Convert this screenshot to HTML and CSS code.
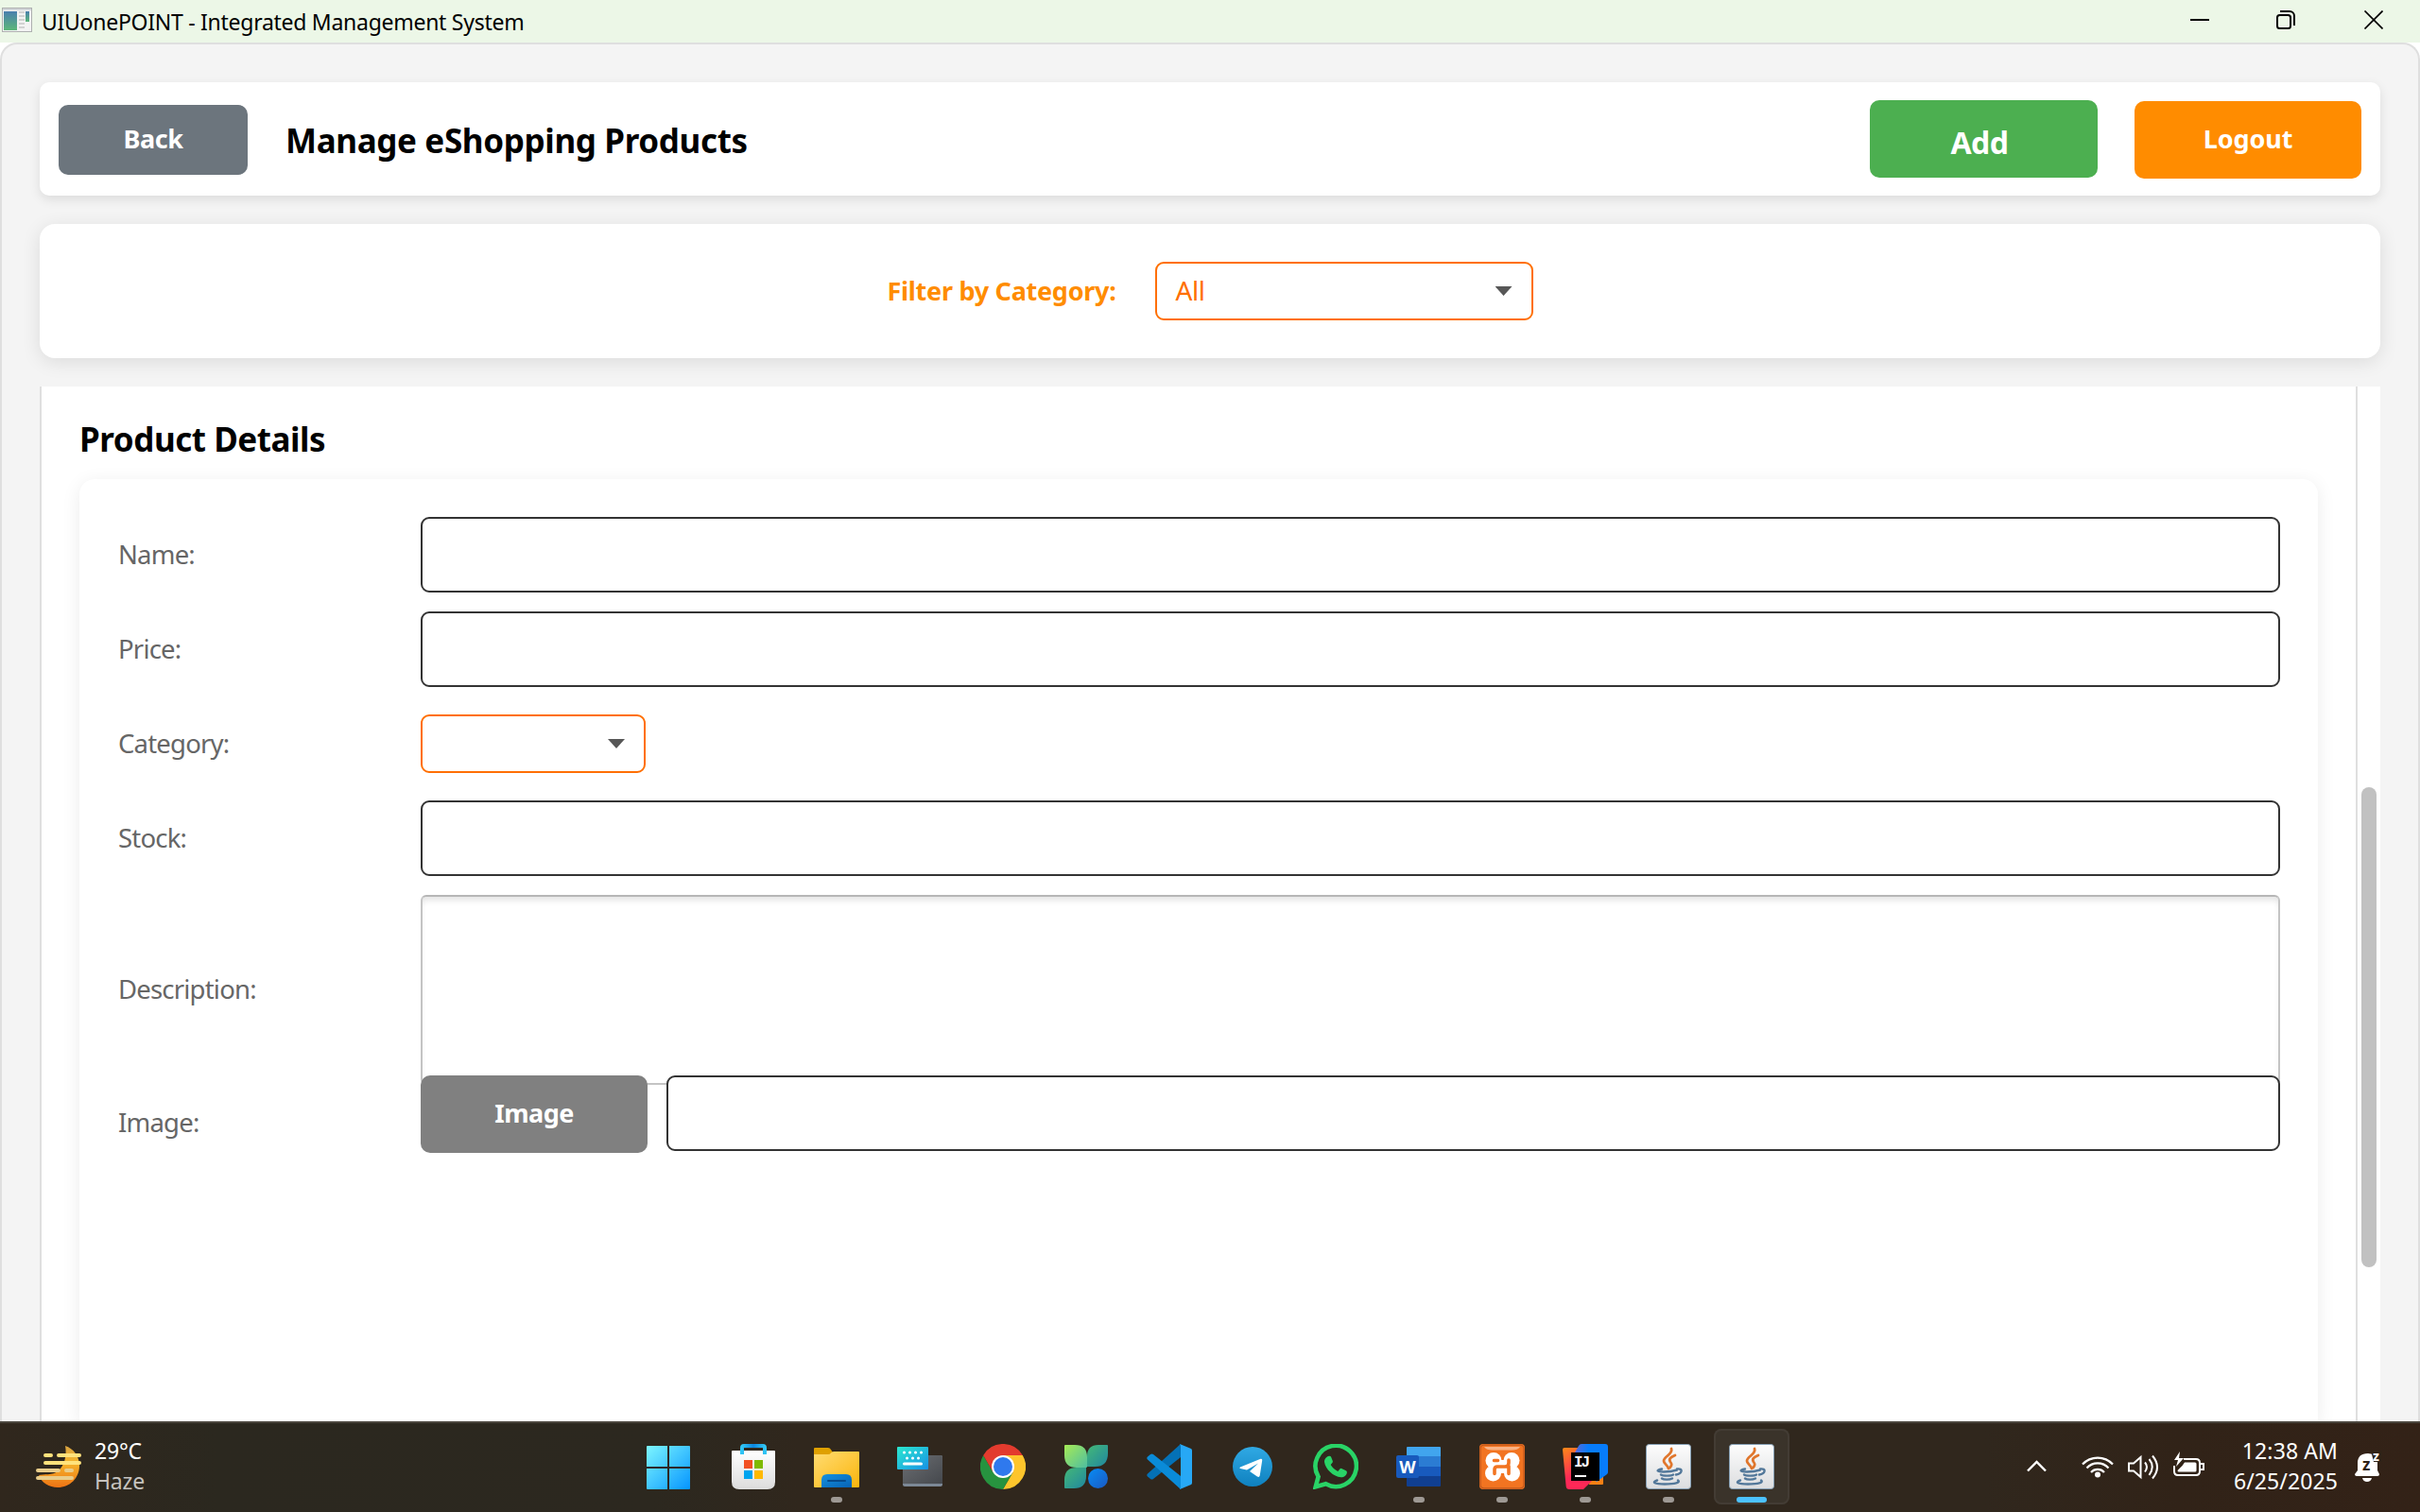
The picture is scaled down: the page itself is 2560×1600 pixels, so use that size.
FILE: index.html
```html
<!DOCTYPE html>
<html lang="en">
<head>
<meta charset="utf-8">
<title>UIUonePOINT - Integrated Management System</title>
<link rel="stylesheet" href="styles.css">
</head>
<body>
<header class="titlebar">
  <svg class="app-icon" width="32" height="26" viewBox="0 0 32 26">
    <defs><linearGradient id="app" x1="0" y1="0" x2="0" y2="1"><stop offset="0" stop-color="#4a7fae"/><stop offset="1" stop-color="#5cb779"/></linearGradient></defs>
    <rect x=".5" y=".5" width="31" height="25" fill="#f3f3f3" stroke="#aeb0b0"/>
    <rect x="1" y="1" width="30" height="2" fill="#d4d7da"/>
    <rect x="2" y="4" width="14" height="20" fill="url(#app)"/>
    <path d="M18 5h6M18 9h6M18 13h6M18 17h6M18 21h6" stroke="#d2d2d2" stroke-width="2"/>
    <rect x="25" y="4" width="4" height="11" fill="url(#app)"/>
  </svg>
  <span class="window-title">UIUonePOINT - Integrated Management System</span>
  <svg class="window-controls" width="204" height="20" viewBox="0 0 204 20" fill="none" stroke="#000" stroke-width="2">
    <path d="M0 10h20"/>
    <rect x="92" y="5" width="14" height="14" rx="2.5"/>
    <path d="M95 1h10a5 5 0 0 1 5 5v10"/>
    <path d="M184.500 .5l19 19M203.500 .5l-19 19" stroke-width="1.700"/>
  </svg>
</header>
<main class="window">
  <section class="card toolbar">
    <button class="btn back">Back</button>
    <h1 class="page-title">Manage eShopping Products</h1>
    <button class="btn add">Add</button>
    <button class="btn logout">Logout</button>
  </section>
  <section class="card filter">
    <span class="filter-label">Filter by Category:</span>
    <div class="combo combo-filter"><span>All</span><i class="arrow"></i></div>
  </section>
  <section class="scroll-pane">
    <div class="content">
      <h2 class="section-title">Product Details</h2>
      <div class="form">
        <label class="label">Name:</label><div class="field"></div>
        <label class="label">Price:</label><div class="field"></div>
        <label class="label">Category:</label><div class="combo combo-category"><i class="arrow"></i></div>
        <label class="label">Stock:</label><div class="field"></div>
        <label class="label">Description:</label><div class="textarea"></div>
        <label class="label image-label">Image:</label>
        <div class="image-row"><button class="btn image">Image</button><div class="field"></div></div>
      </div>
    </div>
    <div class="scrollbar"><div class="thumb"></div></div>
  </section>
</main>
<footer class="taskbar">
  <div class="weather">
    <svg width="48" height="44" viewBox="0 0 48 44">
      <defs><linearGradient id="moon" x1="0" y1="0" x2="0" y2="1"><stop offset="0" stop-color="#d9a441"/><stop offset=".4" stop-color="#f5b52c"/><stop offset="1" stop-color="#ee7414"/></linearGradient></defs>
      <path d="M31 0c9 3 15 11 15 21 0 13-10 23-23 23-9 0-17-5-20-13 5-1 15 0 20-4 7-5 10-17 8-27z" fill="url(#moon)"/>
      <g fill="none" stroke-width="4" stroke-linecap="round"><path d="M10 10h6M24 10h22M10 18h36" stroke="#ffe27c"/><path d="M2 26h22M32 26h6M2 34h36" stroke="#e9cd8b"/></g>
    </svg>
    <div class="weather-text">29°C<br><span class="dim">Haze</span></div>
  </div>
  <nav class="apps">
    <div class="app start"><svg viewBox="0 0 48 48"><defs><linearGradient id="win" gradientUnits="userSpaceOnUse" x1="1" y1="2" x2="47" y2="48"><stop offset="0" stop-color="#7df6ff"/><stop offset="1" stop-color="#0595ff"/></linearGradient></defs><path d="M2 2h21v22H1V3q0-1 1-1zM25 2h21q1 0 1 1v21H25zM1 26h22v22H2q-1 0-1-1zM25 26h22v21q0 1-1 1H25z" fill="url(#win)"/></svg></div>
    <div class="app"><svg viewBox="0 0 48 48"><defs><linearGradient id="bag" x1="0" y1="0" x2="0" y2="1"><stop offset="0" stop-color="#fff"/><stop offset="1" stop-color="#dcdcdc"/></linearGradient><linearGradient id="hdl"><stop offset="0" stop-color="#30c5f4"/><stop offset=".5" stop-color="#0c86e0"/><stop offset="1" stop-color="#30c5f4"/></linearGradient></defs><path d="M2 7h44q1 0 1 1v32q0 8-8 8H9q-8 0-8-8V8q0-1 1-1z" fill="url(#bag)"/><path d="M12 11V4q0-2 2-2h20q2 0 2 2v7" fill="none" stroke="url(#hdl)" stroke-width="4"/><path d="M14 17h9v9h-9z" fill="#f25022"/><path d="M25 17h9v9h-9z" fill="#7fba00"/><path d="M14 28h9v9h-9z" fill="#00a4ef"/><path d="M25 28h9v9h-9z" fill="#ffb900"/></svg></div>
    <div class="app"><svg viewBox="0 0 48 48"><defs><linearGradient id="fold" x1="0" y1="0" x2="1" y2="1"><stop offset="0" stop-color="#ffdc72"/><stop offset="1" stop-color="#fbb50d"/></linearGradient><linearGradient id="fb" x1="0" y1="0" x2="1" y2="1"><stop offset="0" stop-color="#1492df"/><stop offset="1" stop-color="#0862b4"/></linearGradient></defs><path d="M0 13V5q0-1 1-1h14q2 0 3 2l2 3v4z" fill="#dfa000"/><path d="M0 11h15q2 0 3-1.500 1-1.500 3-1.500h26q1 0 1 1v36q0 1-1 1H1q-1 0-1-1z" fill="url(#fold)"/><path d="M8 46V38q0-6 6-6h20q6 0 6 6v8z" fill="url(#fb)"/><path d="M15 39h18" stroke="#064b8c" stroke-width="2" stroke-linecap="round"/></svg><i class="dot"></i></div>
    <div class="app"><svg viewBox="0 0 48 48"><defs><linearGradient id="kb" x1="0" y1="0" x2="1" y2="1"><stop offset="0" stop-color="#2be8cf"/><stop offset="1" stop-color="#1791e6"/></linearGradient><linearGradient id="tab" x1="0" y1="0" x2="1" y2="1"><stop offset="0" stop-color="#6c6f73"/><stop offset="1" stop-color="#45484d"/></linearGradient></defs><rect x="6" y="12" width="42" height="33" rx="2" fill="#7c8896"/><path d="M6 14q0-2 2-2h38q2 0 2 2v28H6z" fill="url(#tab)"/><rect y="3" width="33" height="24" rx="1" fill="url(#kb)"/><path d="M7.500 9h.01M13.500 9h.01M19.500 9h.01M25.500 9h.01M10.500 15h.01M16.500 15h.01M22.500 15h.01M7.500 21h18" stroke="#fff" stroke-width="3" stroke-linecap="round"/></svg></div>
    <div class="app"><svg viewBox="0 0 48 48"><path d="M24 24 3.200 12A24 24 0 0 1 44.800 12z" fill="#e33b2e"/><path d="M24 12h20.800A24 24 0 0 1 24 48l10.400-18z" fill="#fdc52c"/><path d="M34.400 30 24 48A24 24 0 0 1 3.200 12l10.400 18 10.400 6z" fill="#27933f"/><path d="M3.200 12 13.600 30 24 24 24 12z" fill="#e33b2e"/><circle cx="24" cy="24" r="12" fill="#fff"/><circle cx="24" cy="24" r="10" fill="#2f79ee"/></svg></div>
    <div class="app"><svg viewBox="0 0 48 48"><defs><linearGradient id="p1" x1="0" y1="0" x2="1" y2="1"><stop offset="0" stop-color="#a6ea55"/><stop offset="1" stop-color="#4fbfa0"/></linearGradient><linearGradient id="p2" x1="0" y1="0" x2="1" y2="1"><stop offset="0" stop-color="#44b877"/><stop offset="1" stop-color="#2087a0"/></linearGradient><linearGradient id="p3" x1="0" y1="0" x2="1" y2="1"><stop offset="0" stop-color="#088cf4"/><stop offset="1" stop-color="#1b59c2"/></linearGradient></defs><path d="M37 1h9q1 0 1 1v8q0 14-14 14h-8V13Q25 1 37 1z" fill="url(#p2)"/><path d="M14 25h10v9q0 13-13 13H2q-1 0-1-1v-8Q1 25 14 25z" fill="url(#p2)"/><path d="M2 1h10q13 0 13 13v10q0 1-1 1H14Q1 25 1 12V2q0-1 1-1z" fill="url(#p1)"/><circle cx="36.500" cy="36.500" r="10.500" fill="url(#p3)"/></svg></div>
    <div class="app"><svg viewBox="0 0 48 48"><path d="M36 0 1 31.500q-1.500 1.500 0 3L4 37q1.500 1 3 0L36 14z" fill="#0471b6"/><path d="M36 48 1 16.500q-1.500-1.500 0-3L4 11q1.500-1 3 0L36 34z" fill="#0a8bd8"/><path d="M35 48q1-1 1-3V3q0-2-1-3l12 5q1 .5 1 2v34q0 1.500-1 2z" fill="#27a8f5"/></svg></div>
    <div class="app"><svg viewBox="0 0 48 48"><defs><linearGradient id="tg" x1="0" y1="0" x2="0" y2="1"><stop offset="0" stop-color="#30a9e4"/><stop offset="1" stop-color="#0f81bf"/></linearGradient></defs><circle cx="24" cy="24" r="21" fill="url(#tg)"/><path d="M11 24.500 32.500 15.800q2-.6 1.700 1.700L31.700 33.500q-.6 2.300-2.700 1l-8-5.500 9-8.500-12 7-7-1.500q-1.500-.8 0-1.500z" fill="#fff"/></svg></div>
    <div class="app"><svg viewBox="0 0 48 48"><path d="M2.700 45.300 5.600 34.600A21.700 21.700 0 1 1 13.500 42.300z" fill="none" stroke="#29d366" stroke-width="4.600"/><path d="M15 13.500q1-1 2.500-.8 1.200.1 1.700 1.300l1.600 3.900q.3 1-.3 1.900l-1.800 2.300q2.600 4.700 7.600 6.800l2.300-2.600q.7-.7 1.600-.3l4.700 2.200q1 .5 1 1.500c0 3.300-3.300 5.700-6.300 5.600-8-.8-16.500-8.300-17.600-16.300-.1-2.500 1.200-4.300 3-5.500z" fill="#29d366"/></svg></div>
    <div class="app"><svg viewBox="0 0 48 48"><path d="M12 3h34q1 0 1 1v9H11V4q0-1 1-1z" fill="#41a5ee"/><path d="M11 13h36v11H11z" fill="#2b7cd3"/><path d="M11 24h36v10H11z" fill="#185abd"/><path d="M11 34h36v10q0 1-1 1H12q-1 0-1-1z" fill="#103f91"/><rect y="12" width="24" height="24" rx="2" fill="#185abd"/><text x="12" y="30.500" class="word-letter">W</text></svg><i class="dot"></i></div>
    <div class="app"><svg viewBox="0 0 48 48"><rect width="48" height="48" rx="4" fill="#f27421"/><rect x="1" y="1" width="46" height="46" rx="4" fill="none" stroke="#c45a1c" stroke-width="1.500"/><path d="M5 3h38q-2 3.500-9 3.500H14Q7 6.500 5 3z" fill="#f9b386"/><g fill="#fff"><circle cx="15" cy="17.500" r="8.500"/><circle cx="34" cy="17.500" r="8.500"/><circle cx="14.500" cy="31" r="8.500"/><circle cx="34.500" cy="31" r="8.500"/><path d="M15 17h19v14H15z"/></g><path d="M16 31.500V27q0-3 3-3h8q4 0 4-4v-3M15.500 17.500h4M31 23.500v8" fill="none" stroke="#f27421" stroke-width="3.600" stroke-linecap="round"/></svg><i class="dot"></i></div>
    <div class="app"><svg viewBox="0 0 48 48"><defs><linearGradient id="ij" x1="0" y1="0" x2=".4" y2="1"><stop offset="0" stop-color="#fc8a18"/><stop offset=".7" stop-color="#fe2857"/></linearGradient><linearGradient id="ij2" x1="0" y1="0" x2="1" y2="0"><stop offset="0" stop-color="#5a68d8"/><stop offset=".4" stop-color="#077cfb"/></linearGradient></defs><path d="M30 30h13v12q0 1-1 1H28z" fill="#f98014"/><path d="M2 4h14l16 10v24L22 48H7q-3 0-3.300-3L0 6q0-2 2-2z" fill="url(#ij)"/><path d="M20 0h25q3 0 3 3v27q0 1-1 2L36 40 13 9l4-7q1-2 3-2z" fill="url(#ij2)"/><rect x="9" y="9" width="30" height="30"/><text x="12" y="24" class="ij-letters">IJ</text><path d="M13 34h12" stroke="#fff" stroke-width="2"/></svg><i class="dot"></i></div>
    <div class="app"><svg viewBox="0 0 48 48"><defs><linearGradient id="jb" x1="0" y1="0" x2="0" y2="1"><stop offset="0" stop-color="#fdfdfd"/><stop offset="1" stop-color="#dcdddf"/></linearGradient></defs><g id="java"><rect x=".5" y=".5" width="47" height="47" rx="3" fill="url(#jb)" stroke="#86a0b5"/><g fill="none" stroke-linecap="round"><path d="M27 5c2 6-8 8-8 13 0 3 4 4 5 8M31 12c-5 2-7 4-5 7 1.500 2 2 3-.5 6" stroke="#e0762c" stroke-width="2.800"/><g stroke="#53789a" stroke-width="2.400"><path d="M17 26.500c-7 1.500-5 3 2 3s11-1 14-2M33 26.500c7-1 5.500 5-1 6M16 32.500c2 1.500 11 1.500 13 0M17 36.500c2 1.500 8 1.500 11 0M12 38.500c-6 2-3 4 8 4s17-1.500 14-4"/></g></g></g></svg><i class="dot"></i></div>
    <div class="app active"><svg viewBox="0 0 48 48"><use href="#java"/></svg><i class="dot"></i></div>
  </nav>
  <div class="tray">
    <svg class="tray-icons" width="188" height="32" viewBox="0 0 188 32" fill="none" stroke="#fff" stroke-width="2">
      <path d="M1 20.500 10.500 11 20 20.500" stroke-width="2.400"/>
      <g stroke-width="2.200"><path d="M59 13.500a22 22 0 0 1 32 0M63.500 17.500a15.500 15.500 0 0 1 23 0M68 22a9.500 9.500 0 0 1 14 0"/></g><circle cx="75" cy="24.500" r="3" fill="#fff" stroke="none"/>
      <path d="M108 12.500h5l7.500-6.500v21l-7.500-6.500h-5zM125 11.500q4 4.500 0 10M129.500 8q6.500 8 0 17M133 4.500q10 12 0 24"/>
      <path d="M166 8h13q4 0 4 4v9q0 4-4 4h-19q-4 0-4-4v-6M183 13h4v6h-4z"/><path d="M167 11.500h11q1.500 0 1.500 1.500v7q0 1.500-1.500 1.500h-17q-1.500 0-1.500-1.500l5-5z" fill="#fff" stroke="none"/><path d="M162 0l-6 9h4l-2 7 8-9h-5z" fill="#fff" stroke="none"/>
    </svg>
    <div class="clock">12:38 AM<br>6/25/2025</div>
    <svg class="bell" width="32" height="40" viewBox="0 -6 32 40"><path d="M3 12Q3 2 14 2q10 0 10 10v8l2 4q0 2-2 2H2q-2 0-2-2l3-4zM8 28h10q-1 4-5 4t-5-4z" fill="#fff"/><path d="M17 -1h12v12h-9z" fill="#302317"/><text x="8" y="20" class="z-big">z</text><text x="19" y="10" class="z-small">z</text></svg>
  </div>
</footer>
</body>
</html>
```
FILE: styles.css
```css
* { box-sizing: border-box; }
body {
  margin: 0;
  width: 2560px;
  height: 1600px;
  overflow: hidden;
  display: flex;
  flex-direction: column;
  background: #fff;
  font-family: "Noto Sans", "Open Sans", sans-serif;
  font-size: 28px;
  color: #000;
}
h1, h2 { margin: 0; }

.titlebar {
  flex: none;
  height: 45px;
  display: flex;
  align-items: center;
  padding: 0 39px 3px 2px;
  background: #ecf7e7;
}
.app-icon { margin-right: 10px; }
.window-title { flex: 1; font-size: 23px; line-height: 30px; padding-top: 3px; letter-spacing: -.27px; }

.window {
  flex: none;
  height: 1459px;
  padding: 40px 40px 0;
  border: 2px solid #dfdfdf;
  border-bottom: 0;
  border-radius: 18px 18px 0 0;
  background: #f4f4f4;
  display: flex;
  flex-direction: column;
  overflow: hidden;
}
.card { flex: none; background: #fff; display: flex; align-items: center; }
.toolbar {
  height: 120px;
  margin-bottom: 30px;
  padding: 0 20px;
  border-radius: 10px;
  box-shadow: 0 4px 12px rgba(0, 0, 0, .1);
}
.filter {
  height: 142px;
  margin-bottom: 30px;
  justify-content: center;
  gap: 41px;
  border-radius: 16px;
  box-shadow: 0 4px 20px rgba(0, 0, 0, .1);
}
.btn {
  flex: none;
  border: 0;
  padding: 0 0 3px;
  border-radius: 10px;
  color: #fff;
  font: bold 27px/38px "Noto Sans", "Open Sans", sans-serif;
  letter-spacing: -.5px;
}
.back { width: 200px; height: 74px; background: #6c757d; margin: 2px 40px 0 0; }
.add { width: 241px; height: 82px; background: #4caf50; font-size: 32px; margin-right: 39px; padding: 7px 9px 0 0; }
.logout { width: 240px; height: 82px; background: #ff8c00; margin-top: 2px; letter-spacing: -.1px; }
.page-title { flex: 1; font-size: 35px; line-height: 48px; padding-top: 4px; letter-spacing: -.35px; }

.filter-label { color: #ff8c00; font-weight: bold; font-size: 27px; letter-spacing: -.27px; padding-bottom: 2px; }
.combo {
  display: flex;
  align-items: center;
  height: 62px;
  border: 2px solid #ff6f00;
  border-radius: 9px;
  padding: 0 20px;
  color: #ff6f00;
}
.combo-filter { width: 400px; }
.combo-filter span { padding-bottom: 2px; letter-spacing: -.4px; }
.arrow {
  margin-left: auto;
  width: 18px;
  height: 10px;
  background: #575757;
  clip-path: polygon(0 0, 100% 0, 50% 100%);
}

.scroll-pane { flex: 1; min-height: 0; display: flex; background: #fff; }
.content {
  flex: 1;
  display: flex;
  flex-direction: column;
  padding: 32px 40px 0;
  border: solid #dfdfdf;
  border-width: 0 2px;
}
.section-title { font-size: 35px; line-height: 48px; margin-bottom: 18px; letter-spacing: -.45px; }
.form {
  flex: 1;
  display: grid;
  grid-template-columns: 320px 1fr;
  grid-template-rows: 80px 80px 80px 80px 201px 82px;
  row-gap: 20px;
  align-items: center;
  padding: 40px 40px 0 41px;
  border-radius: 16px 16px 0 0;
  background: #fff;
  box-shadow: 0 4px 20px rgba(0, 0, 0, .08);
}
.label { color: #666; font-size: 27.5px; letter-spacing: -.8px; padding-bottom: 2px; }
.field {
  height: 80px;
  border: 2px solid #333;
  border-radius: 9px;
  background: #fff;
}
.combo-category { width: 238px; }
.textarea {
  height: 201px;
  border: 2px solid #c4c4c4;
  border-top-color: #b6b6b6;
  border-radius: 6px;
  box-shadow: inset 0 6px 6px -2px #e6e6e6;
}
.image-row {
  display: flex;
  align-items: flex-start;
  gap: 20px;
  margin-top: -60px;
}
.image-row .field { flex: 1; }
.image { width: 240px; height: 82px; background: #808080; }
.image-label { margin-top: -41px; }

.scrollbar { width: 24px; padding: 424px 4px 0; }
.thumb { height: 508px; border-radius: 8px; background: #c1c1c1; }

.taskbar {
  flex: none;
  height: 96px;
  display: flex;
  align-items: center;
  padding-bottom: 2px;
  border-top: 2px solid #4b463e;
  background: linear-gradient(90deg, #30271d, #2b281f 9%, #2c281f 27%, #30271d 33%, #30271d 82%, #312318 90%, #332217);
  color: #fff;
  font-size: 23px;
  line-height: 32px;
}
.weather { display: flex; align-items: center; width: 669px; padding-left: 38px; gap: 14px; }
.weather-text { padding-bottom: 2px; letter-spacing: -.2px; }
.dim { color: #c6c3bf; }
.apps { display: flex; gap: 8px; }
.app {
  width: 80px;
  height: 80px;
  display: grid;
  place-items: center;
  border-radius: 8px;
  position: relative;
}
.app svg { width: 48px; height: 48px; }
.start svg { margin-left: -4px; }
.dot {
  position: absolute;
  bottom: 2px;
  left: 34px;
  width: 12px;
  height: 6px;
  border-radius: 3px;
  background: #9e9994;
}
.active { background: #3a332a; box-shadow: inset 0 0 0 2px #433c34; }
.active .dot { left: 24px; width: 32px; background: #4cc2ff; }
.word-letter { font: bold 18px "Noto Sans", sans-serif; fill: #fff; text-anchor: middle; }
.ij-letters { font: bold 16px "Liberation Mono", monospace; fill: #fff; letter-spacing: -2px; }
.tray { flex: 1; display: flex; align-items: center; justify-content: flex-end; padding-right: 37px; }
.tray-icons { margin-right: 11px; }
.clock { width: 130px; text-align: right; margin-right: 18px; padding-bottom: 2px; letter-spacing: .1px; }
.bell { margin-bottom: 4px; }
.z-big { font: bold 17px "Noto Sans", sans-serif; fill: #302317; }
.z-small { font: bold 14px "Noto Sans", sans-serif; fill: #fff; }
```
